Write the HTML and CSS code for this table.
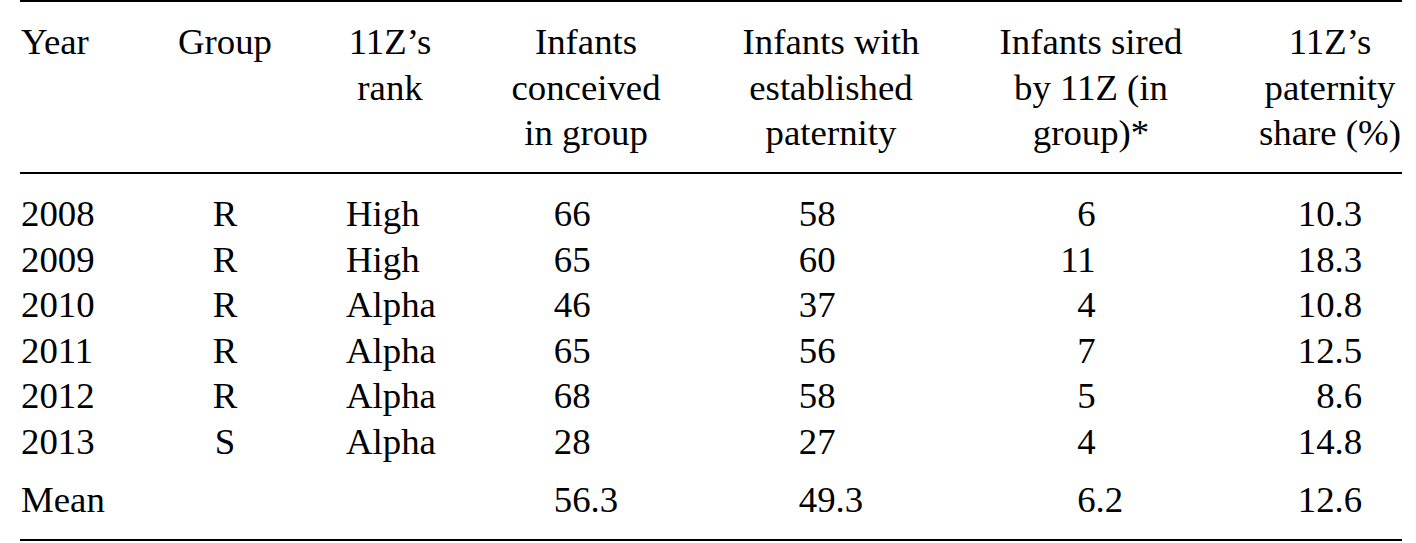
FILE: index.html
```html
<!DOCTYPE html>
<html lang="en">
<head>
<meta charset="utf-8">
<title>11Z paternity</title>
<link rel="stylesheet" href="styles.css">
</head>
<body>
<table class="tbl">
  <colgroup>
    <col class="c1"><col class="c2"><col class="c3"><col class="c4"><col class="c5"><col class="c6"><col class="c7">
  </colgroup>
  <thead>
    <tr>
      <th class="left">Year</th>
      <th>Group</th>
      <th class="rank">11Z’s<br>rank</th>
      <th>Infants<br>conceived<br>in group</th>
      <th>Infants with<br>established<br>paternity</th>
      <th>Infants sired<br>by 11Z (in<br>group)*</th>
      <th class="share">11Z’s<br>paternity<br>share (%)</th>
    </tr>
  </thead>
  <tbody>
    <tr class="first">
      <td class="left">2008</td><td>R</td><td class="rank rl">High</td>
      <td><span class="i">66</span><span class="f"></span></td>
      <td><span class="i">58</span><span class="f"></span></td>
      <td><span class="i">6</span><span class="f"></span></td>
      <td class="share"><span class="i">10</span><span class="f">.3</span></td>
    </tr>
    <tr>
      <td class="left">2009</td><td>R</td><td class="rank rl">High</td>
      <td><span class="i">65</span><span class="f"></span></td>
      <td><span class="i">60</span><span class="f"></span></td>
      <td><span class="i">11</span><span class="f"></span></td>
      <td class="share"><span class="i">18</span><span class="f">.3</span></td>
    </tr>
    <tr>
      <td class="left">2010</td><td>R</td><td class="rank rl">Alpha</td>
      <td><span class="i">46</span><span class="f"></span></td>
      <td><span class="i">37</span><span class="f"></span></td>
      <td><span class="i">4</span><span class="f"></span></td>
      <td class="share"><span class="i">10</span><span class="f">.8</span></td>
    </tr>
    <tr>
      <td class="left">2011</td><td>R</td><td class="rank rl">Alpha</td>
      <td><span class="i">65</span><span class="f"></span></td>
      <td><span class="i">56</span><span class="f"></span></td>
      <td><span class="i">7</span><span class="f"></span></td>
      <td class="share"><span class="i">12</span><span class="f">.5</span></td>
    </tr>
    <tr>
      <td class="left">2012</td><td>R</td><td class="rank rl">Alpha</td>
      <td><span class="i">68</span><span class="f"></span></td>
      <td><span class="i">58</span><span class="f"></span></td>
      <td><span class="i">5</span><span class="f"></span></td>
      <td class="share"><span class="i">8</span><span class="f">.6</span></td>
    </tr>
    <tr>
      <td class="left">2013</td><td>S</td><td class="rank rl">Alpha</td>
      <td><span class="i">28</span><span class="f"></span></td>
      <td><span class="i">27</span><span class="f"></span></td>
      <td><span class="i">4</span><span class="f"></span></td>
      <td class="share"><span class="i">14</span><span class="f">.8</span></td>
    </tr>
    <tr class="mean">
      <td class="left">Mean</td><td></td><td class="rank rl"></td>
      <td><span class="i">56</span><span class="f">.3</span></td>
      <td><span class="i">49</span><span class="f">.3</span></td>
      <td><span class="i">6</span><span class="f">.2</span></td>
      <td class="share"><span class="i">12</span><span class="f">.6</span></td>
    </tr>
  </tbody>
</table>
</body>
</html>
```

FILE: styles.css
```css
html, body {
  margin: 0;
  padding: 0;
  background: #ffffff;
}

body {
  font-family: "Liberation Serif", "Times New Roman", serif;
  font-size: 36.8px;
  line-height: 45.5px;
  color: #000000;
}

.tbl {
  margin-left: 20px;
  width: 1382px;
  table-layout: fixed;
  border-collapse: separate;
  border-spacing: 0;
  border-top: 2px solid #000;
  border-bottom: 2px solid #000;
}

.c1 { width: 130px; }
.c2 { width: 150px; }
.c3 { width: 180px; }
.c4 { width: 212px; }
.c5 { width: 278px; }
.c6 { width: 242px; }
.c7 { width: 190px; }

.tbl th,
.tbl td {
  padding: 0;
  text-align: center;
  vertical-align: top;
  white-space: nowrap;
  font-weight: normal;
}

.tbl th {
  padding-top: 17px;
  padding-bottom: 16.5px;
  border-bottom: 2px solid #000;
}

.tbl .left {
  text-align: left;
  padding-left: 1px;
}

.tbl .rank {
  padding-left: 46px;
  padding-right: 46px;
}

.tbl .rl {
  text-align: left;
}

.tbl .share {
  padding-left: 46px;
}

.tbl tr.first td {
  padding-top: 17px;
}

.tbl tr.mean td {
  padding-top: 13px;
  padding-bottom: 16.5px;
}

.i {
  display: inline-block;
  width: 1em;
  text-align: right;
}

.f {
  display: inline-block;
  width: 0.75em;
  text-align: left;
}
```
